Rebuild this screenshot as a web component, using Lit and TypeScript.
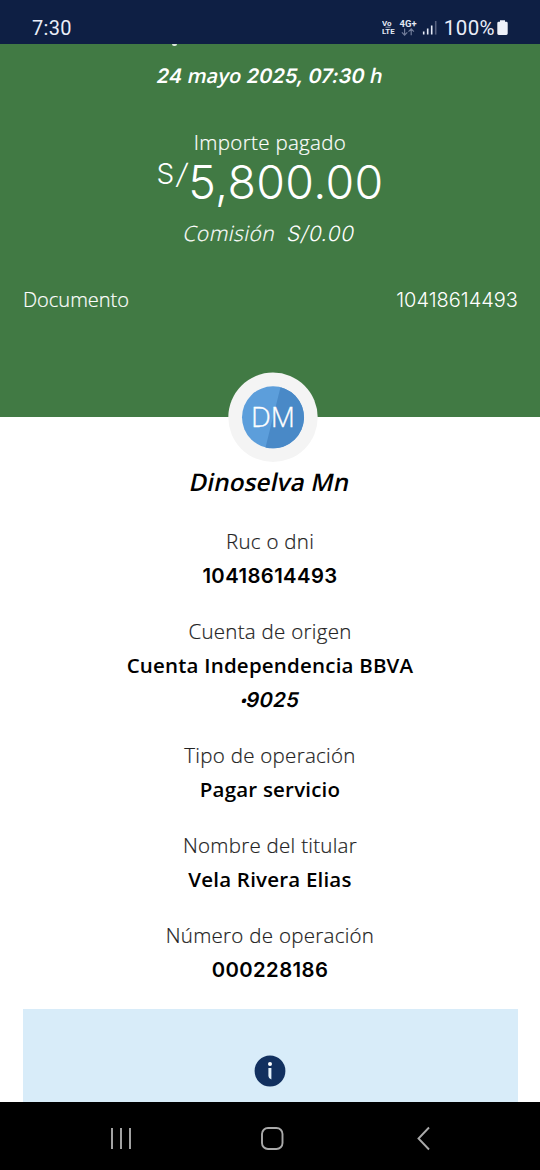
import { LitElement, html, css } from "lit";
import { customElement } from "lit/decorators.js";

@customElement("status-bar")
class StatusBar extends LitElement {
  static styles = css`
    :host { display: block; flex: none; height: 44px; background: #0e1f44; color: #e9edf8; font-family: Roboto, sans-serif; }
    .bar { display: flex; align-items: center; height: 44px; padding: 11px 30px 0 32px; box-sizing: border-box; }
    .time { font-size: 20px; line-height: 24px; flex: 1; letter-spacing: 0.3px; }
    .pct { font-size: 20.5px; line-height: 24px; letter-spacing: 0.4px; }
    .right { display: flex; align-items: center; }
    svg { display: block; }
  `;
  render() {
    return html`<div class="bar">
      <span class="time">7:30</span>
      <div class="right">
        <svg width="62" height="24" viewBox="0 0 62 24" font-family="Roboto, sans-serif" font-weight="700" fill="#e4e9f5">
          <text x="0" y="10.4" font-size="8">Vo</text>
          <path d="M3.5 11.2H8.5" stroke="#aab2c6" stroke-width="0.8" />
          <text x="0" y="17.6" font-size="8" textLength="12.6" lengthAdjust="spacingAndGlyphs">LTE</text>
          <text x="17.6" y="10.8" font-size="9.3" textLength="17" lengthAdjust="spacingAndGlyphs">4G+</text>
          <path d="M22.6 12.6V19M19.9 16.4L22.6 19.1L25.3 16.4M29.2 19.2V13M26.5 15.6L29.2 12.9L31.9 15.6" fill="none" stroke="#717c99" stroke-width="1.2" />
          <path d="M41.7 15.4V18.6M45.7 12.4V18.6M49.7 9.4V18.6" stroke="#e4e9f5" stroke-width="1.6" />
          <path d="M53.7 5V18.6" stroke="#56617f" stroke-width="1.6" />
        </svg>
        <span class="pct">100%</span>
        <svg width="15" height="24" viewBox="0 0 15 24"><path d="M5 4.2h5v1.6h1.3q1.4 0 1.4 1.4v10.4q0 1.4-1.4 1.4H3.7q-1.4 0-1.4-1.4V7.2q0-1.4 1.4-1.4H5z" fill="#eef1fa" /></svg>
      </div>
    </div>`;
  }
}

@customElement("detail-item")
class DetailItem extends LitElement {
  static properties = { label: { type: String } };
  declare label: string;
  static styles = css`
    :host { display: block; text-align: center; font-size: 20.5px; line-height: 33.75px; }
    .label { color: #222; font-weight: 300; letter-spacing: 0.28px; -webkit-text-stroke: 0.2px #222; }
    .value { color: #000; font-weight: 600; letter-spacing: 0.2px; }
    ::slotted(.num) { font-family: Inter, sans-serif; font-size: 20.3px; line-height: 20px; letter-spacing: 0.4px; }
    ::slotted(.slant) { display: inline-block; transform: skewX(-12deg); }
  `;
  render() {
    return html`<div class="label">${this.label}</div><div class="value"><slot></slot></div>`;
  }
}

@customElement("app-root")
class AppRoot extends LitElement {
  static styles = css`
    :host { display: flex; flex-direction: column; width: 540px; height: 1170px; overflow: hidden; background: #fff; font-family: "Open Sans", sans-serif; }
    .summary { flex: none; height: 373px; box-sizing: border-box; background: #417a44; color: #fff; display: flex; flex-direction: column; align-items: center; position: relative; white-space: nowrap; }
    .sliver { position: absolute; left: 172px; top: 0; width: 5px; height: 1.5px; border-radius: 0 0 2px 2px; background: #dcebdc; }
    .num { font-family: Inter, sans-serif; line-height: 20px; -webkit-text-stroke: 0; }
    .date { margin-top: 17px; font-size: 20px; line-height: 30px; font-weight: 600; letter-spacing: 0.07px; transform: skewX(-12deg); }
    .caption { margin-top: 37px; font-size: 20.5px; line-height: 28px; font-weight: 300; letter-spacing: 0.33px; -webkit-text-stroke: 0.2px #fff; }
    .amount { display: flex; height: 46px; margin-top: 2px; font-weight: 300; font-family: Inter, sans-serif; }
    .currency { font-size: 28px; line-height: 32px; display: flex; }
    .slash { display: inline-block; margin: 0 3px 0 1.5px; transform: skewX(-10deg); }
    .figure { font-size: 46.5px; line-height: 48px; letter-spacing: 0.35px; }
    .fee { margin-top: 14px; font-size: 21px; line-height: 30px; font-weight: 300; letter-spacing: 0.5px; -webkit-text-stroke: 0.2px #fff; transform: skewX(-12deg); white-space: pre; }
    .doc { align-self: stretch; display: flex; justify-content: space-between; align-items: center; height: 30px; margin-top: 37px; padding: 0 22px 0 23px; font-size: 20px; line-height: 30px; font-weight: 300; -webkit-text-stroke: 0.2px #fff; }
    .avatar { position: relative; flex: none; display: block; width: 90px; height: 90px; margin: -45px auto 0 228px; }
    .name { margin-top: 2px; height: 36px; line-height: 36px; font-size: 24.3px; font-weight: 600; letter-spacing: 0.1px; transform: skewX(-12deg); text-align: center; color: #000; }
    .details { display: flex; flex-direction: column; gap: 22.5px; margin-top: 25px; }
    .bullet { font-size: 17px; line-height: 13px; font-family: "Open Sans", sans-serif; letter-spacing: -1px; }
    .notice { flex: 1; margin: 23px 22.5px 0; background: #d8ecf9; display: flex; justify-content: center; align-items: flex-start; padding-top: 46px; min-height: 0; box-sizing: border-box; }
    .nav { flex: none; height: 68px; background: #000; display: block; }
  `;
  render() {
    return html`
      <status-bar></status-bar>
      <section class="summary">
        <div class="sliver"></div>
        <div class="date"><span class="num">24</span> mayo <span class="num">2025, 07:30</span> h</div>
        <div class="caption">Importe pagado</div>
        <div class="amount"><span class="currency">S<span class="slash">/</span></span><span class="figure">5,800.00</span></div>
        <div class="fee">Comisión  <span class="num">S/0.00</span></div>
        <div class="doc"><span>Documento</span><span class="num">10418614493</span></div>
      </section>
      <svg class="avatar" viewBox="0 0 90 90">
        <circle cx="45" cy="45.3" r="44.7" fill="#f4f4f4" />
        <circle cx="45" cy="45.3" r="31" fill="#5c9edb" />
        <path d="M52.5 15.2A31 31 0 1 1 37.5 75.4Z" fill="#4989c7" />
        <text x="45" y="54.7" text-anchor="middle" textLength="44" font-family="Open Sans, sans-serif" font-weight="300" font-size="28" fill="#fff" stroke="#fff" stroke-width="0.35">DM</text>
      </svg>
      <div class="name">Dinoselva Mn</div>
      <div class="details">
        <detail-item label="Ruc o dni"><span class="num">10418614493</span></detail-item>
        <detail-item label="Cuenta de origen">Cuenta Independencia BBVA<br /><span class="num slant"><span class="bullet">•</span>9025</span></detail-item>
        <detail-item label="Tipo de operación">Pagar servicio</detail-item>
        <detail-item label="Nombre del titular">Vela Rivera Elias</detail-item>
        <detail-item label="Número de operación"><span class="num">000228186</span></detail-item>
      </div>
      <div class="notice">
        <svg width="32" height="32" viewBox="0 0 32 32">
          <circle cx="16" cy="16" r="15.4" fill="#12305f" />
          <circle cx="16" cy="9" r="2" fill="#fff" />
          <path d="M14.4 13h3v11.6q-3-1.2-3-3.6z" fill="#e4f1fa" />
        </svg>
      </div>
      <svg class="nav" viewBox="0 0 540 68" width="540" height="68" fill="none" stroke="#aaa" stroke-width="1.9">
        <path d="M112 26V47M121 26V47M130 26V47" />
        <rect x="262" y="26" width="20.5" height="21" rx="6" />
        <path d="M429 25.5L418.5 36.5L429 47.5" />
      </svg>
    `;
  }
}
